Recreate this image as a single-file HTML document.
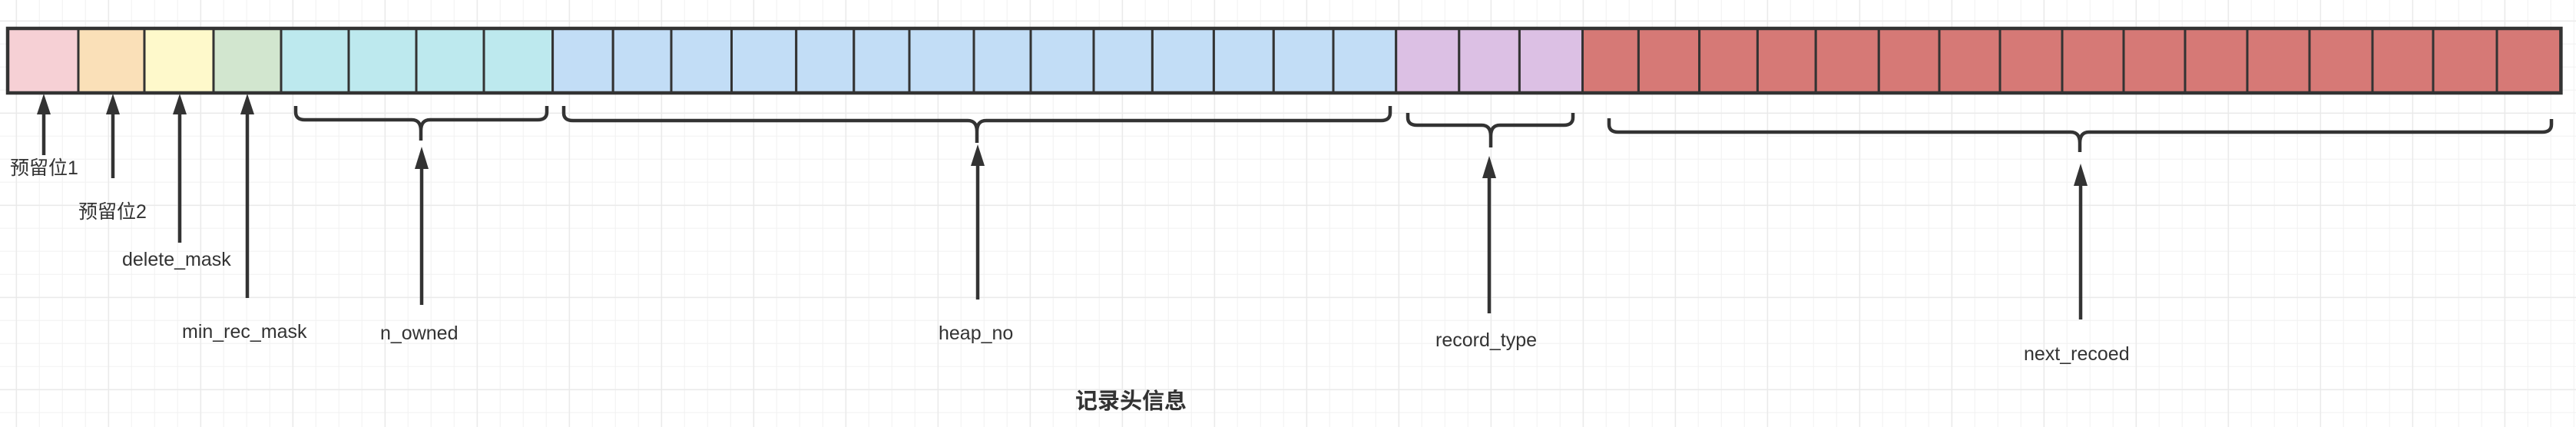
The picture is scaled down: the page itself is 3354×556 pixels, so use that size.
<!DOCTYPE html>
<html><head><meta charset="utf-8"><style>
html,body{margin:0;padding:0;background:#fff;}
svg{display:block;}
text{font-family:"Liberation Sans","Noto Sans CJK SC",sans-serif;fill:#333;}
</style></head><body>
<svg width="3354" height="556" viewBox="0 0 3354 556" xmlns="http://www.w3.org/2000/svg">
<defs>
<pattern id="minor" x="20.7" y="26.7" width="30" height="30" patternUnits="userSpaceOnUse">
<path d="M0 0V30M0 0H30" stroke="#f1f1f1" stroke-width="2" fill="none"/>
</pattern>
<pattern id="major" x="20.7" y="26.7" width="120" height="120" patternUnits="userSpaceOnUse">
<path d="M0 0V120M0 0H120" stroke="#e8e8e8" stroke-width="2.5" fill="none"/>
</pattern>
</defs>
<rect width="3354" height="556" fill="#fff"/>
<rect width="3354" height="556" fill="url(#minor)"/>
<rect width="3354" height="556" fill="url(#major)"/>

<!-- cells -->
<g stroke="#333" stroke-width="3">
<rect x="10" y="37" width="92" height="84" fill="#f6d0d5"/>
<rect x="102" y="37" width="86" height="84" fill="#fae0b8"/>
<rect x="188" y="37" width="90" height="84" fill="#fef9cb"/>
<rect x="278" y="37" width="88" height="84" fill="#d2e6cf"/>
<rect x="366" y="37" width="88" height="84" fill="#bde9ee"/>
<rect x="454" y="37" width="88" height="84" fill="#bde9ee"/>
<rect x="542" y="37" width="88" height="84" fill="#bde9ee"/>
<rect x="630" y="37" width="89.6" height="84" fill="#bde9ee"/>
</g>
<g stroke="#333" stroke-width="3" fill="#c2ddf6">
<rect x="719.6" y="37" width="78.6" height="84"/>
<rect x="798.2" y="37" width="75.8" height="84"/>
<rect x="874" y="37" width="78.5" height="84"/>
<rect x="952.5" y="37" width="84.2" height="84"/>
<rect x="1036.7" y="37" width="75.1" height="84"/>
<rect x="1111.8" y="37" width="72.2" height="84"/>
<rect x="1184" y="37" width="84" height="84"/>
<rect x="1268" y="37" width="74" height="84"/>
<rect x="1342" y="37" width="82" height="84"/>
<rect x="1424" y="37" width="76.4" height="84"/>
<rect x="1500.4" y="37" width="80" height="84"/>
<rect x="1580.4" y="37" width="77.9" height="84"/>
<rect x="1658.3" y="37" width="77.7" height="84"/>
<rect x="1736" y="37" width="81.7" height="84"/>
</g>
<g stroke="#333" stroke-width="3" fill="#dcc0e4">
<rect x="1817.7" y="37" width="82.1" height="84"/>
<rect x="1899.8" y="37" width="78.6" height="84"/>
<rect x="1978.4" y="37" width="82.1" height="84"/>
</g>
<g stroke="#333" stroke-width="3" fill="#d67976">
<rect x="2060.5" y="37" width="72.9" height="84"/>
<rect x="2133.4" y="37" width="79.2" height="84"/>
<rect x="2212.6" y="37" width="75.8" height="84"/>
<rect x="2288.4" y="37" width="75.8" height="84"/>
<rect x="2364.2" y="37" width="82.1" height="84"/>
<rect x="2446.3" y="37" width="78.7" height="84"/>
<rect x="2525" y="37" width="79" height="84"/>
<rect x="2604" y="37" width="81" height="84"/>
<rect x="2685" y="37" width="80" height="84"/>
<rect x="2765" y="37" width="80" height="84"/>
<rect x="2845" y="37" width="81" height="84"/>
<rect x="2926" y="37" width="81" height="84"/>
<rect x="3007" y="37" width="82" height="84"/>
<rect x="3089" y="37" width="79" height="84"/>
<rect x="3168" y="37" width="83" height="84"/>
<rect x="3251" y="37" width="83.4" height="84"/>
</g>
<rect x="10" y="37" width="3324.4" height="84" fill="none" stroke="#333" stroke-width="4.5"/>

<!-- braces -->
<g fill="none" stroke="#333" stroke-width="4.5" stroke-linecap="butt">
<path d="M385 138V146Q385 156 397 156H536Q548 156 548 170V183M548 183V170Q548 156 560 156H700Q712 156 712 146V138"/>
<path d="M734 138V147Q734 157 746 157H1260Q1272 157 1272 171V186M1272 186V171Q1272 157 1284 157H1798Q1810 157 1810 147V138"/>
<path d="M1833 147V153Q1833 163 1845 163H1929Q1941 163 1941 177V192M1941 192V177Q1941 163 1953 163H2036Q2048 163 2048 153V147"/>
<path d="M2095 154V162Q2095 172 2107 172H2696Q2708 172 2708 186V198M2708 198V186Q2708 172 2720 172H3310Q3322 172 3322 162V155"/>
</g>

<!-- arrows -->
<g stroke="#333" stroke-width="4.5">
<line x1="57" y1="145" x2="57" y2="202"/>
<line x1="147" y1="145" x2="147" y2="232"/>
<line x1="234" y1="145" x2="234" y2="316"/>
<line x1="322" y1="145" x2="322" y2="388"/>
<line x1="549" y1="215" x2="549" y2="397"/>
<line x1="1273" y1="212" x2="1273" y2="390"/>
<line x1="1939" y1="228" x2="1939" y2="408"/>
<line x1="2709" y1="238" x2="2709" y2="416"/>
</g>
<g fill="#333">
<path d="M57 122L66 149H48Z"/>
<path d="M147 122L156 149H138Z"/>
<path d="M234 122L243 149H225Z"/>
<path d="M322 122L331 149H313Z"/>
<path d="M549 191L558 220H540Z"/>
<path d="M1273 188L1282 216H1264Z"/>
<path d="M1939 203L1948 232H1930Z"/>
<path d="M2709 213L2718 242H2700Z"/>
</g>

<!-- labels -->
<g font-size="25">
<text x="13" y="227">预留位1</text>
<text x="102" y="284">预留位2</text>
<text x="159" y="346">delete_mask</text>
<text x="237" y="440">min_rec_mask</text>
<text x="495" y="442">n_owned</text>
<text x="1222" y="442">heap_no</text>
<text x="1869" y="451">record_type</text>
<text x="2635" y="469">next_recoed</text>
</g>
<text x="1400" y="532" font-size="29" font-weight="bold">记录头信息</text>
</svg>
</body></html>
